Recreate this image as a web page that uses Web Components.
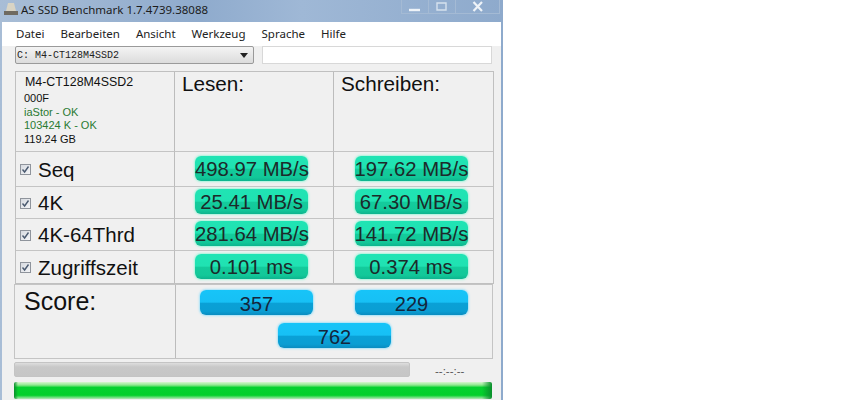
<!DOCTYPE html>
<html>
<head>
<meta charset="utf-8">
<style>
html, body { margin: 0; background: #fff; overflow: hidden; }
body { width: 867px; height: 400px; font-family: "Liberation Sans", Arial, sans-serif; }
</style>
</head>
<body>
<ssd-window>
	<ssd-menu slot="menu"></ssd-menu>
	<ssd-drive slot="drive"></ssd-drive>
	<ssd-results slot="results"></ssd-results>
	<ssd-score slot="score"></ssd-score>
	<ssd-progress slot="progress"></ssd-progress>
</ssd-window>

<script>
// small helper so every element below stays short
function define(tag, html, init) {
	customElements.define(tag, class extends HTMLElement {
		constructor() {
			super();
			this.attachShadow({mode: 'open'}).innerHTML = html;
			if (init) init(this);
		}
	});
}

define('ssd-pill', `
<style>
	:host { display: block; width: 113px; height: 25px; box-sizing: border-box; border-radius: 6px;
		font: 20.3px/27px "Liberation Sans", Arial, sans-serif; color: #1c2a2a; text-align: center; white-space: nowrap;
		background: linear-gradient(#20e4b4 0, #20e2b2 48%, #14cb9c 54%, #12c899 85%, #0db48e 100%);
		box-shadow: 0 0 2px 1px #a6f5dc; }
	:host([kind=score]) { color: #14263c; font-size: 20px; line-height: 28px;
		background: linear-gradient(#17c4f8 0, #17c0f5 48%, #0aa0d6 54%, #0a9ed3 85%, #0a8cc0 100%);
		box-shadow: 0 0 2px 1px #a4e2f8; }
</style><slot></slot>`);

define('ssd-check', `
<style>
	:host { display: block; width: 11px; height: 11px; box-sizing: border-box; border: 1px solid #8f949c;
		background: linear-gradient(135deg, #d6dae0, #f4f5f7); flex: none; }
	svg { display: block; }
</style>
<svg width="9" height="9" viewBox="0 0 9 9"><path d="M1.5 4.5 L3.6 7 L7.5 1.5" fill="none" stroke="#4a5a70" stroke-width="1.4"/></svg>`);

define('ssd-menu', `
<style>
	:host { display: flex; gap: 16px; height: 24px; box-sizing: border-box; padding: 0 0 2px 14px; align-items: center; background: #fff;
		font: 11.5px "Noto Sans", "Open Sans", sans-serif; color: #222; }
</style>
<span>Datei</span><span>Bearbeiten</span><span>Ansicht</span><span>Werkzeug</span><span>Sprache</span><span>Hilfe</span>`);

define('ssd-drive', `
<style>
	:host { display: flex; gap: 8px; height: 18px; padding-left: 13px; }
	.combo { width: 239px; box-sizing: border-box; border: 1px solid #9a9a9a; border-radius: 2px; display: flex;
		align-items: center; justify-content: space-between; padding: 0 5px 0 1px;
		background: linear-gradient(#f4f4f4, #dcdcdc);
		font: 10px "Liberation Mono", "DejaVu Sans Mono", monospace; color: #222; }
	.arrow { width: 0; height: 0; border: 4px solid transparent; border-top: 5px solid #222; border-bottom: 0; }
	.input { width: 230px; box-sizing: border-box; border: 1px solid #d8d8d8; background: #fff; }
</style>
<div class="combo"><span>C: M4-CT128M4SSD2</span><i class="arrow"></i></div><div class="input"></div>`);

define('ssd-results', `
<style>
	:host { display: grid; grid-template-columns: 159px 159px 159px; grid-template-rows: 80px 35px 32px 32px 32px;
		margin: 7px 0 0 13px; width: 479px; box-sizing: border-box; border: 1px solid #c0c0c0; color: #111; }
	.c { border-right: 1px solid #bcbcbc; border-bottom: 1px solid #c4c4c4; box-sizing: border-box;
		display: flex; align-items: center; }
	/* the style tag is child 1, so the last column is 3n+1 */
	.c:nth-child(3n+1) { border-right: 0; }
	.c:nth-last-child(-n+3) { border-bottom: 0; }
	.val { justify-content: center; padding: 0 5px 2px 0; }
	.name { padding: 1px 0 0 4px; gap: 7px; font-size: 20.5px; }
	.head { align-items: flex-start; font-size: 20.7px; padding: 0 0 0 7px; }
	.info { display: block; padding: 3px 0 0 8px; font-size: 11px; line-height: 13.5px; }
	.info b { display: block; font-weight: normal; font-size: 12.4px; margin: 0 0 2px 1px; line-height: 15px; }
	.ok { color: #2a7a32; }
</style>
<div class="c info"><b>M4-CT128M4SSD2</b>000F<br><span class="ok">iaStor - OK</span><br><span class="ok">103424 K - OK</span><br>119.24 GB</div>
<div class="c head">Lesen:</div>
<div class="c head">Schreiben:</div>
<div class="c name"><ssd-check></ssd-check>Seq</div>
<div class="c val"><ssd-pill>498.97 MB/s</ssd-pill></div>
<div class="c val"><ssd-pill>197.62 MB/s</ssd-pill></div>
<div class="c name"><ssd-check></ssd-check>4K</div>
<div class="c val"><ssd-pill>25.41 MB/s</ssd-pill></div>
<div class="c val"><ssd-pill>67.30 MB/s</ssd-pill></div>
<div class="c name"><ssd-check></ssd-check>4K-64Thrd</div>
<div class="c val"><ssd-pill>281.64 MB/s</ssd-pill></div>
<div class="c val"><ssd-pill>141.72 MB/s</ssd-pill></div>
<div class="c name"><ssd-check></ssd-check>Zugriffszeit</div>
<div class="c val"><ssd-pill>0.101 ms</ssd-pill></div>
<div class="c val"><ssd-pill>0.374 ms</ssd-pill></div>`);

define('ssd-score', `
<style>
	:host { display: grid; grid-template-columns: 161px 1fr; width: 479px; height: 75px; box-sizing: border-box;
		margin: 0 0 0 12px; border: 1px solid #c4c4c4; color: #111; }
	.label { border-right: 1px solid #bcbcbc; font-size: 25px; padding: 0 0 0 9px; line-height: 33px; }
	.pills { display: grid; grid-template-columns: 113px 113px; column-gap: 42px; row-gap: 8px;
		padding: 5px 0 0 24px; align-content: start; }
	.total { grid-column: 1 / 3; justify-self: center; margin-left: 1px; }
</style>
<div class="label">Score:</div>
<div class="pills">
	<ssd-pill kind="score">357</ssd-pill>
	<ssd-pill kind="score">229</ssd-pill>
	<ssd-pill kind="score" class="total">762</ssd-pill>
</div>`);

define('ssd-progress', `
<style>
	:host { display: block; margin: 3px 0 0 12px; width: 478px; }
	.row { display: flex; align-items: center; height: 15px; }
	.grey { width: 396px; height: 15px; box-sizing: border-box; border: 1px solid #c4c4c4; border-radius: 2px;
		background: linear-gradient(#dedede, #c8c8c8 30%, #c6c6c6); }
	.time { font: 11.5px "Liberation Sans", sans-serif; color: #555; margin: 3px 0 0 25px; }
	.green { height: 17px; margin-top: 5px; border-radius: 2px; box-sizing: border-box;
		background:
			linear-gradient(90deg, #0a8f2c, transparent 4px, transparent calc(100% - 10px), #0a8f2c),
			linear-gradient(#d8f5d0 0, #8fe88f 18%, #06d12f 32%, #04cf2b 78%, #b8e8b8 100%); }
</style>
<div class="row"><div class="grey"></div><span class="time">--:--:--</span></div>
<div class="green"></div>`);

define('ssd-window', `
<style>
	:host { display: block; width: 503px; height: 400px; box-sizing: border-box; overflow: hidden;
		background: linear-gradient(90deg, #a8bdd6, #8fabcd 40%, #9fb8d6 60%, #8eaacc); }
	.title { display: flex; align-items: center; height: 22px; box-sizing: border-box; padding: 0 0 4px 3px; gap: 2px;
		font: 11.5px "Noto Sans", "Open Sans", sans-serif; color: #1c1c1c; }
	.title svg { flex: none; }
	.caption { display: flex; margin-left: auto; margin-right: 3px; align-self: flex-start; height: 13px;
		border: 1px solid #a4bad4; border-top: 0; }
	.caption i { display: flex; align-items: center; justify-content: center; width: 26px; border-right: 1px solid #a4bad4; }
	.caption i:last-child { width: 43px; border-right: 0; }
	.client { margin: 0 2px 0 2px; height: 378px; background: #f0f0f0; }
</style>
<div class="title">
	<svg width="16" height="16" viewBox="0 0 16 16"><path d="M5 2h6l2 8H3z" fill="#d9d4c4"/><path d="M1 10h14v4H1z" fill="#6f6a60"/></svg>
	<span>AS SSD Benchmark 1.7.4739.38088</span>
	<div class="caption">
		<i><svg width="12" height="10" viewBox="0 0 12 10"><path d="M0 8h11" stroke="#eef3f8" stroke-width="2.4"/></svg></i>
		<i><svg width="12" height="10" viewBox="0 0 12 10"><path d="M1 1h9v7H1z" fill="none" stroke="#d6e2ee" stroke-width="1.4"/></svg></i>
		<i><svg width="12" height="11" viewBox="0 0 12 11"><path d="M1.5 1 L10 10 M10 1 L1.5 10" stroke="#eef3f8" stroke-width="2.2"/></svg></i>
	</div>
</div>
<div class="client"><slot name="menu"></slot><slot name="drive"></slot><slot name="results"></slot><slot name="score"></slot><slot name="progress"></slot></div>`);
</script>
</body>
</html>
